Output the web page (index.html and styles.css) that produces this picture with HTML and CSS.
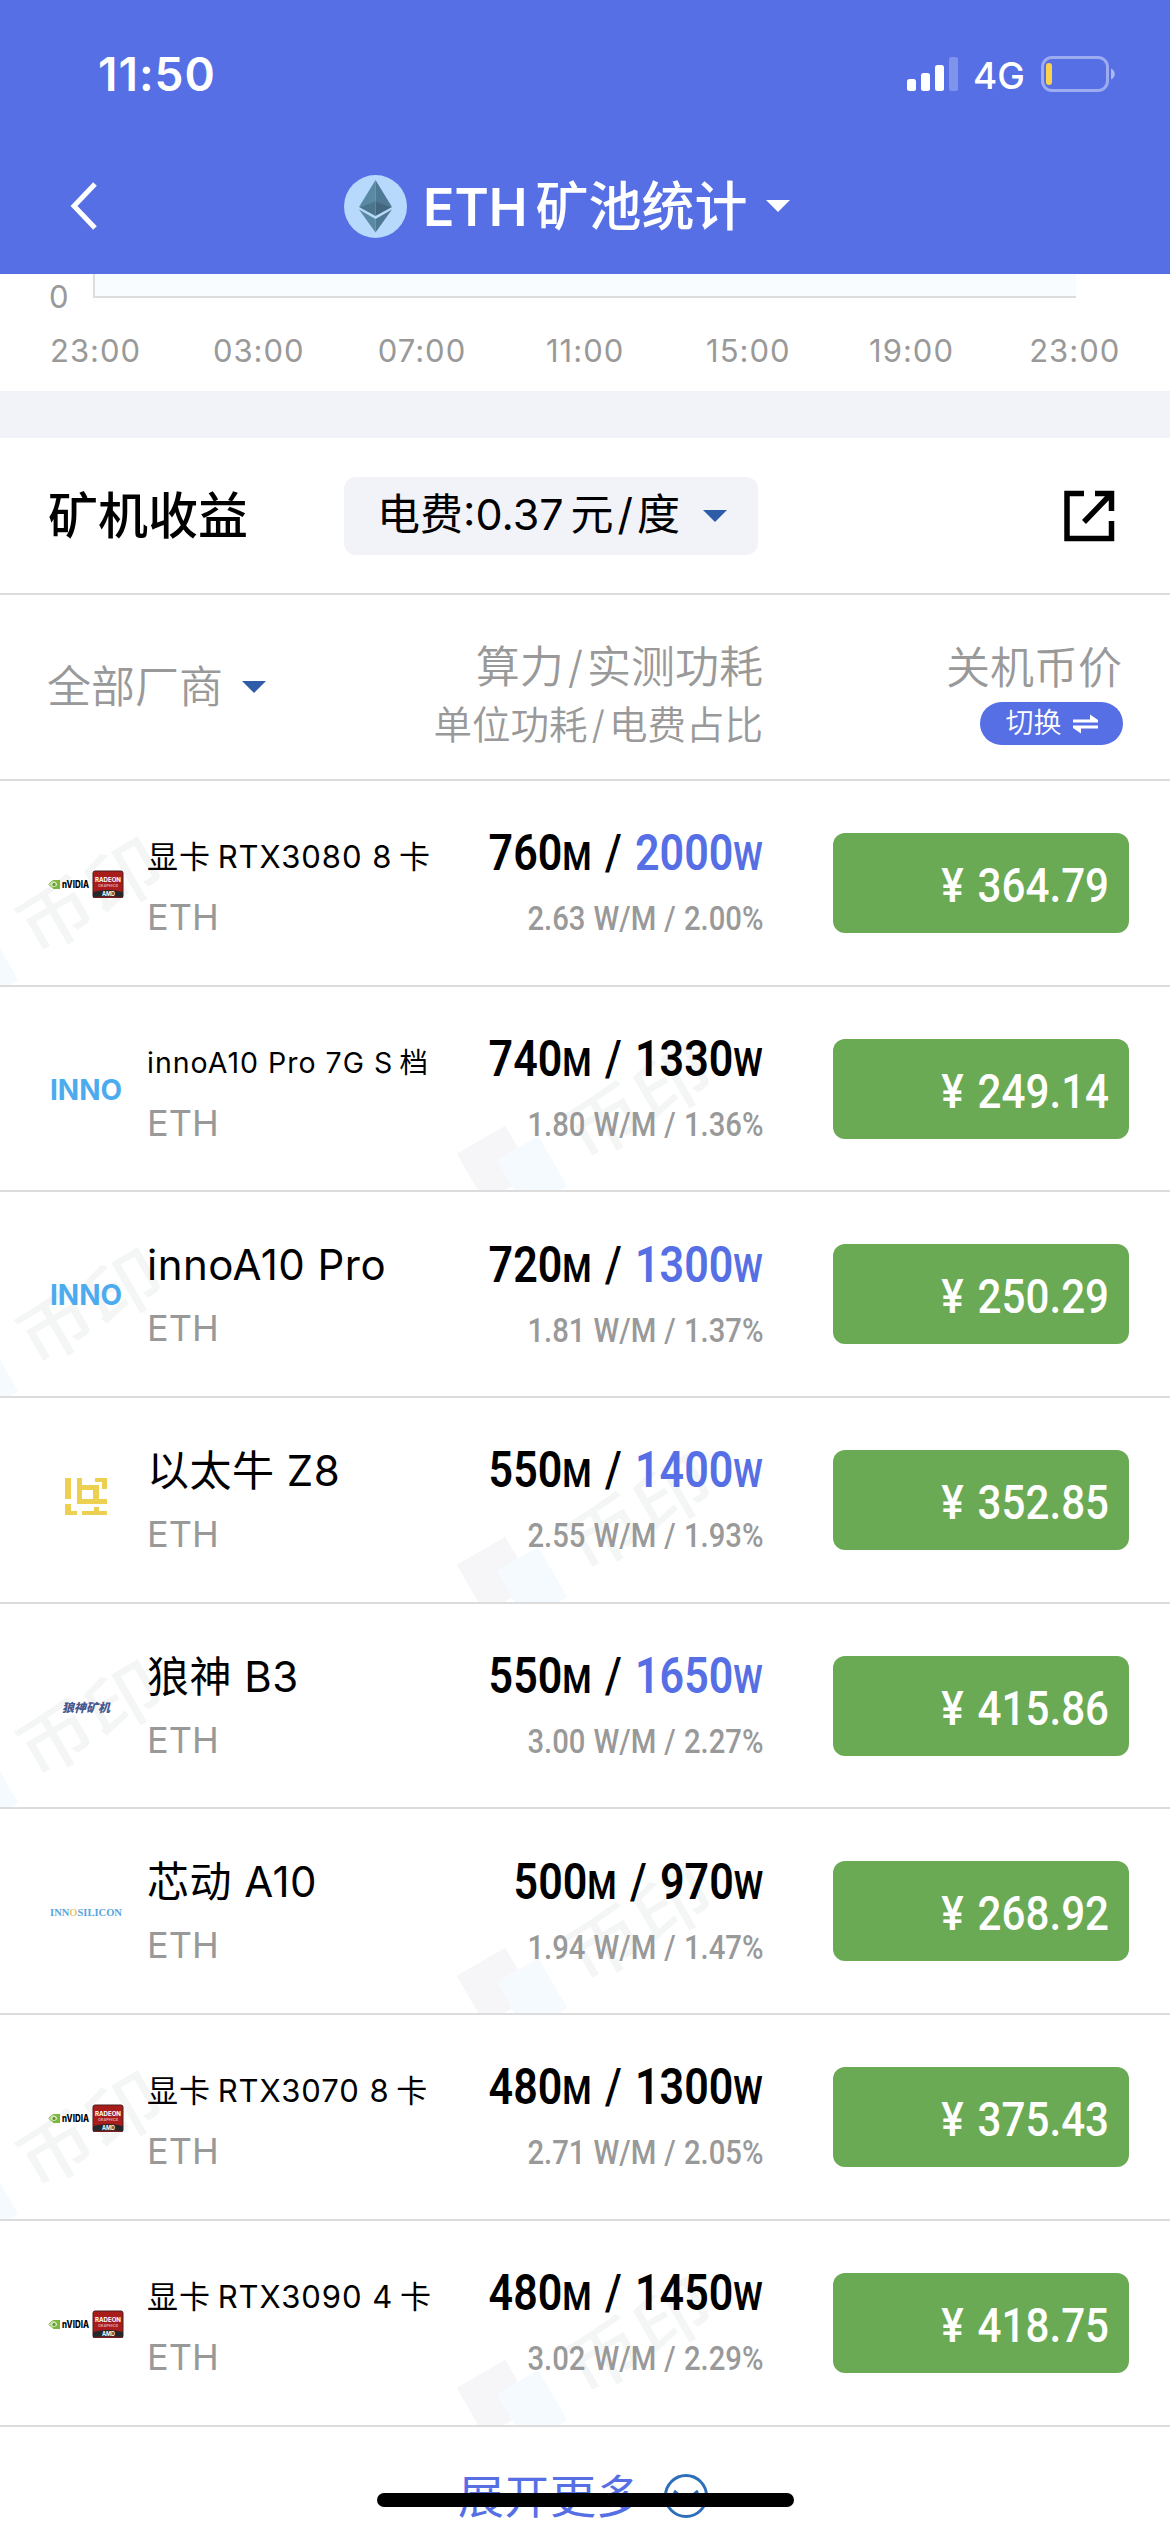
FILE: index.html
```html
<!DOCTYPE html>
<html lang="zh-CN">
<head>
<meta charset="UTF-8">
<meta name="viewport" content="width=device-width, initial-scale=1.0">
<title>ETH矿池统计</title>
<link rel="stylesheet" href="styles.css">
</head>
<body>
<!-- header -->
<header class="header">
  <div class="status-bar">
    <span class="time">11:50</span>
    <div class="status-right">
      <svg class="signal" width="51" height="34" viewBox="0 0 51 34">
        <g fill="#fff">
          <rect x="0" y="22" width="9" height="12" rx="2.5"/>
          <rect x="14" y="16" width="9" height="18" rx="2.5"/>
          <rect x="28" y="8" width="9" height="26" rx="2.5"/>
          <rect x="42" y="0" width="9" height="34" rx="2.5" opacity=".25"/>
        </g>
      </svg>
      <span class="network">4G</span>
      <svg class="battery" width="75" height="36" viewBox="0 0 75 36">
        <rect x="1.5" y="1.5" width="65" height="33" rx="9.5" fill="none" stroke="#fff" stroke-opacity=".42" stroke-width="3"/>
        <path d="M70 12.5c5 2 5 9 0 11z" fill="#fff" fill-opacity=".5"/>
        <rect x="5" y="7" width="6" height="22" rx="3" fill="#fcd24b"/>
      </svg>
    </div>
  </div>
  <div class="nav-bar">
    <svg class="back" width="28" height="48" viewBox="0 0 28 48"><path d="M25 2L4 24l21 22" fill="none" stroke="#fff" stroke-width="5"/></svg>
    <svg class="coin" width="63" height="63" viewBox="0 0 63 63">
      <circle cx="31.5" cy="31.5" r="31.5" fill="#b7d9fc"/>
      <path d="M31.5 5L15 32 31.5 27z" fill="#5a89a3"/>
      <path d="M31.5 5L48 32 31.5 27z" fill="#4f7893"/>
      <path d="M15 32L31.5 26.500v14.500z" fill="#4b758b"/>
      <path d="M48 32L31.5 26.500v14.500z" fill="#43667e"/>
      <path d="M15 34.500l16.500 9.500V57.500z" fill="#5a89a3"/>
      <path d="M48 34.500L31.500 44V57.500z" fill="#4f7893"/>
    </svg>
    <h1>ETH<span class="cjk">矿池统计</span></h1>
    <i class="caret white"></i>
  </div>
</header>

<!-- bottom of the hashrate chart -->
<section class="chart">
  <div class="plot"><span class="zero">0</span><div class="area"></div></div>
  <div class="ticks">
    <span>23:00</span><span>03:00</span><span>07:00</span><span>11:00</span><span>15:00</span><span>19:00</span><span>23:00</span>
  </div>
</section>

<section class="toolbar">
  <h2>矿机收益</h2>
  <div class="fee"><span>电费:0.37<span class="unit">元<b class="slash">/</b>度</span></span><i class="caret"></i></div>
  <svg class="share" width="52" height="52" viewBox="0 0 52 52" fill="none" stroke="#000" stroke-width="5.500">
    <path d="M21 3.500H4v45h44.500V31"/><path d="M32 3.500h16.500V21M48 4L21 32"/>
  </svg>
</section>

<section class="table-head">
  <div class="maker">全部厂商<i class="caret"></i></div>
  <div class="head-mid"><div>算力<b class="slash">/</b>实测功耗</div><div class="small">单位功耗<b class="slash">/</b>电费占比</div></div>
  <div class="head-right">
    <div>关机币价</div>
    <div class="switch">切换
      <svg width="25" height="20" viewBox="0 0 25 20" fill="#fff"><path d="M0 5.500h17V.5L25 6v2.500H0zM25 11.500H0V14l8 5.500v-5h17z"/></svg>
    </div>
  </div>
</section>

<main class="list" id="list"></main>

<div class="more">展开更多
  <svg width="44" height="44" viewBox="0 0 44 44" fill="none" stroke="#2d6fb9" stroke-width="3"><circle cx="22" cy="22" r="20.500"/><path d="M10 17l12 10 12-10"/></svg>
</div>
<div class="home-bar"></div>

<script src="list.js"></script>
</body>
</html>
```
FILE: list.js
```javascript
var logos = {
  gpu: '<svg width="76" height="28" viewBox="0 0 76 28">' +
    '<path d="M5 10h7v9H5z" fill="#7db83a"/><path d="M1 14.500c3-5 7-5 9 0-2 4-6 4-9 0z" fill="#cfe4b4" stroke="#76b03a"/><circle cx="6" cy="14.500" r="1.500" fill="#5d9428"/>' +
    '<text x="14" y="18" class="nv" textLength="27" lengthAdjust="spacingAndGlyphs">nVIDIA</text>' +
    '<rect x="45" y="1" width="30" height="27" rx="2" fill="#a81c1c" stroke="#4a2020"/>' +
    '<path d="M45 22q15-4 30 0v5q-15-1-30 0z" fill="#25282b"/>' +
    '<text x="47" y="12" class="amd" textLength="26" lengthAdjust="spacingAndGlyphs">RADEON</text>' +
    '<text x="50" y="17" class="amd tiny" textLength="20" lengthAdjust="spacingAndGlyphs">GRAPHICS</text>' +
    '<text x="54" y="26" class="amd" textLength="13" lengthAdjust="spacingAndGlyphs">AMD</text></svg>',
  inno: '<span class="inno">INNO</span>',
  niu: '<svg width="42" height="38" viewBox="0 0 42 38" fill="#edd04f"><path d="M0 0h6v21H0zM0 26h6v7h6v4H0zM12 0h5v7h17v14h8v5H12zM17 12v9h11v-9zM30 0h12v11h-5V4h-7zM17 33h12v-4h5v4h8v4H17z" fill-rule="evenodd"/></svg>',
  wolf: '<span class="wolf">狼神矿机</span>',
  silicon: '<span class="silicon">INN<b>O</b>SILICON</span>'
};

// logo, name, name size, hashrate, power, highlighted, efficiency, share, price
var miners = [
  ['gpu', '显卡&thinsp;RTX3080 8&thinsp;卡', 'small', 760, 2000, true, '2.63', '2.00', '364.79'],
  ['inno', 'innoA10 Pro 7G S&thinsp;档', 'small long', 740, 1330, false, '1.80', '1.36', '249.14'],
  ['inno', 'innoA10 Pro', '', 720, 1300, true, '1.81', '1.37', '250.29'],
  ['niu', '以太牛 Z8', '', 550, 1400, true, '2.55', '1.93', '352.85'],
  ['wolf', '狼神 B3', '', 550, 1650, true, '3.00', '2.27', '415.86'],
  ['silicon', '芯动 A10', '', 500, 970, false, '1.94', '1.47', '268.92'],
  ['gpu', '显卡&thinsp;RTX3070 8&thinsp;卡', 'small', 480, 1300, false, '2.71', '2.05', '375.43'],
  ['gpu', '显卡&thinsp;RTX3090 4&thinsp;卡', 'small', 480, 1450, false, '3.02', '2.29', '418.75']
];

var html = '';
miners.forEach(function (m) {
  html += '<div class="row">' +
    '<div class="watermark"><i class="sq"></i><i class="sq blue"></i><span>币印</span></div>' +
    '<div class="logo ' + m[0] + '-box">' + logos[m[0]] + '</div>' +
    '<div class="name"><div class="model ' + m[2] + '">' + m[1] + '</div><div class="coin-name">ETH</div></div>' +
    '<div class="stats"><div class="power">' + m[3] + '<small>M</small> <i>/</i> <span' + (m[5] ? ' class="hot"' : '') + '>' + m[4] + '<small>W</small></span></div>' +
    '<div class="ratio">' + m[6] + ' W/M / ' + m[7] + '%</div></div>' +
    '<div class="price"><span>¥ ' + m[8] + '</span></div>' +
    '</div>';
});
document.getElementById('list').innerHTML = html;
```
FILE: styles.css
```css
* {
  box-sizing: border-box;
}
body {
  margin: 0;
  width: 1170px;
  height: 2532px;
  overflow: hidden;
  position: relative;
  background: #fff;
  color: #000;
  font-family: Inter, "Noto Sans CJK SC", sans-serif;
}
svg {
  display: block;
  flex: none;
}
h1, h2 {
  margin: 0;
}
.header {
  height: 274px;
  background: #566fe5;
  color: #fff;
}
.status-bar {
  height: 148px;
  padding: 0 54px 0 98px;
  display: flex;
  justify-content: space-between;
  align-items: center;
}
.time {
  font-size: 46px;
  font-weight: 600;
  letter-spacing: 1px;
}
.status-right {
  display: flex;
  align-items: center;
}
.network {
  font-size: 37px;
  font-weight: 500;
  margin: 2px 16px 0 15px;
}
.nav-bar {
  height: 116px;
  padding-left: 70px;
  display: flex;
  align-items: center;
}
.coin {
  margin-left: 246px;
}
h1 {
  margin: 3px 0 0 16px;
  font-size: 52px;
  font-weight: 600;
  line-height: 60px;
  white-space: nowrap;
}
h1 .cjk {
  font-size: 53px;
  font-weight: 500;
  margin-left: 8px;
}
.caret {
  display: inline-block;
  border: 12.5px solid transparent;
  border-top: 12px solid #2e5ca8;
  border-bottom: 0;
}
.caret.white {
  border-top-color: #fff;
  margin-left: 18px;
}
.chart {
  height: 117px;
  color: #999;
  font-size: 31px;
  letter-spacing: 1px;
}
.plot {
  display: flex;
  height: 46px;
}
.zero {
  width: 93px;
  padding-left: 49px;
  line-height: 46px;
}
.area {
  width: 983px;
  height: 24px;
  background: #f8fcff;
  border-left: 2px solid #ddd;
  border-bottom: 2px solid #ddd;
}
.ticks {
  display: flex;
  padding: 11px 0 0 14px;
  line-height: 40px;
}
.ticks span {
  width: 163.2px;
  text-align: center;
}
.toolbar {
  border-top: 47px solid #f2f3f8;
  border-bottom: 2px solid #dcdcdc;
  height: 204px;
  padding: 0 55px 0 48px;
  display: flex;
  align-items: center;
}
h2 {
  width: 296px;
  padding-bottom: 7px;
  font-size: 50px;
  font-weight: 500;
  white-space: nowrap;
}
.fee {
  width: 414px;
  height: 78px;
  border-radius: 12px;
  background: #f2f3f8;
  display: flex;
  align-items: center;
  justify-content: space-between;
  padding: 0 31px 0 33px;
  font-size: 43px;
  line-height: 74px;
  white-space: nowrap;
}
.fee > span {
  height: 78px;
}
.unit {
  margin-left: 7px;
}
.slash {
  font-weight: inherit;
  margin: 0 4px;
}
.share {
  margin-left: auto;
}
.table-head {
  height: 186px;
  border-bottom: 2px solid #dcdcdc;
  display: flex;
  align-items: center;
  color: #999;
  font-size: 44px;
  font-weight: 350;
  line-height: 58px;
}
.maker {
  width: 340px;
  padding-left: 47px;
  display: flex;
  align-items: center;
  gap: 19px;
}
.head-mid {
  width: 423px;
  padding-top: 17px;
  text-align: right;
}
.head-mid .small {
  font-size: 38.5px;
}
.head-right {
  width: 360px;
  padding-top: 10px;
  text-align: right;
}
.head-right > div:first-child {
  padding-right: 1px;
}
.switch {
  width: 143px;
  height: 43px;
  margin: 5px 0 0 auto;
  border-radius: 22px;
  background: #566fe5;
  color: #fff;
  font-size: 28px;
  line-height: 41px;
  display: flex;
  align-items: center;
  justify-content: center;
  gap: 11px;
}
.row {
  position: relative;
  overflow: hidden;
  height: 205.7px;
  border-bottom: 2px solid #dcdcdc;
  display: flex;
  align-items: center;
}
.row > div {
  position: relative;
  z-index: 1;
}
/* the mark sits at the left on odd rows and in the middle on even rows */
.row > .watermark {
  position: absolute;
  z-index: 0;
  left: -92px;
  top: 60px;
  width: 300px;
  height: 146px;
}
.row:nth-child(even) > .watermark {
  left: 457px;
}
.watermark i {
  position: absolute;
  left: 10px;
  top: 89px;
  width: 56px;
  height: 56px;
  background: #f6f6f9;
  transform: rotate(-30deg);
}
.watermark .blue {
  left: 51px;
  top: 97px;
  width: 48px;
  height: 58px;
  background: #f5faff;
}
.watermark span {
  position: absolute;
  left: 104px;
  top: 17px;
  font-size: 78px;
  font-weight: 500;
  line-height: 78px;
  color: #f4f6f6;
  white-space: nowrap;
  transform: rotate(-30deg) scaleY(.88);
}
.logo {
  width: 78px;
  height: 40px;
  margin: 2px 22px 0 47px;
  display: flex;
  align-items: center;
  justify-content: center;
}
.niu-box {
  padding-bottom: 8px;
}
.nv {
  font: 800 10px Inter, sans-serif;
}
.amd {
  font: 700 6px Inter, sans-serif;
  fill: #fff;
}
.amd.tiny {
  font-size: 4px;
  fill: #e0a0a0;
}
.inno {
  color: #4cabef;
  font-size: 28px;
  font-weight: 700;
}
.wolf {
  color: #47598f;
  font-size: 12px;
  font-weight: 900;
  font-style: italic;
}
.silicon {
  color: #55a5dc;
  font: 700 10.5px "Liberation Serif", serif;
}
.silicon b {
  color: #e8c66b;
}
.name {
  width: 290px;
  white-space: nowrap;
}
.model {
  height: 64px;
  line-height: 62px;
  font-size: 42px;
  letter-spacing: .5px;
}
.model.small {
  font-size: 31px;
  line-height: 68px;
  letter-spacing: 1px;
}
.model.long {
  font-size: 28.5px;
}
.coin-name {
  height: 56px;
  line-height: 60px;
  font-size: 36px;
  color: #999;
}
.stats {
  width: 326px;
  font-family: Roboto, sans-serif;
  white-space: nowrap;
  display: flex;
  flex-direction: column;
  align-items: flex-end;
}
.power, .ratio {
  transform: scaleX(.86);
  transform-origin: right;
}
.power {
  font-size: 50px;
  font-weight: 600;
  line-height: 68px;
  word-spacing: 3px;
}
.power small {
  font-size: 39px;
}
.power i {
  font-style: normal;
  font-weight: 500;
}
.hot {
  color: #566fe5;
}
.ratio {
  color: #999;
  font-size: 34px;
  font-weight: 500;
  line-height: 55px;
  word-spacing: 1px;
}
.price {
  width: 296px;
  height: 100px;
  margin-left: 70px;
  padding-right: 20px;
  border-radius: 12px;
  background: #6aaa54;
  color: #fff;
  text-align: right;
  font: 500 49px/105px Roboto, sans-serif;
  word-spacing: 4px;
}
.price span {
  display: inline-block;
  transform: scaleX(.86);
  transform-origin: right;
}
.more {
  height: 106px;
  padding: 32px 0 0 458px;
  display: flex;
  align-items: center;
  gap: 22px;
  font-size: 46px;
  line-height: 60px;
  color: #566fe5;
}
.home-bar {
  position: absolute;
  left: 377px;
  top: 2493px;
  width: 417px;
  height: 14px;
  border-radius: 7px;
  background: #000;
}
```
